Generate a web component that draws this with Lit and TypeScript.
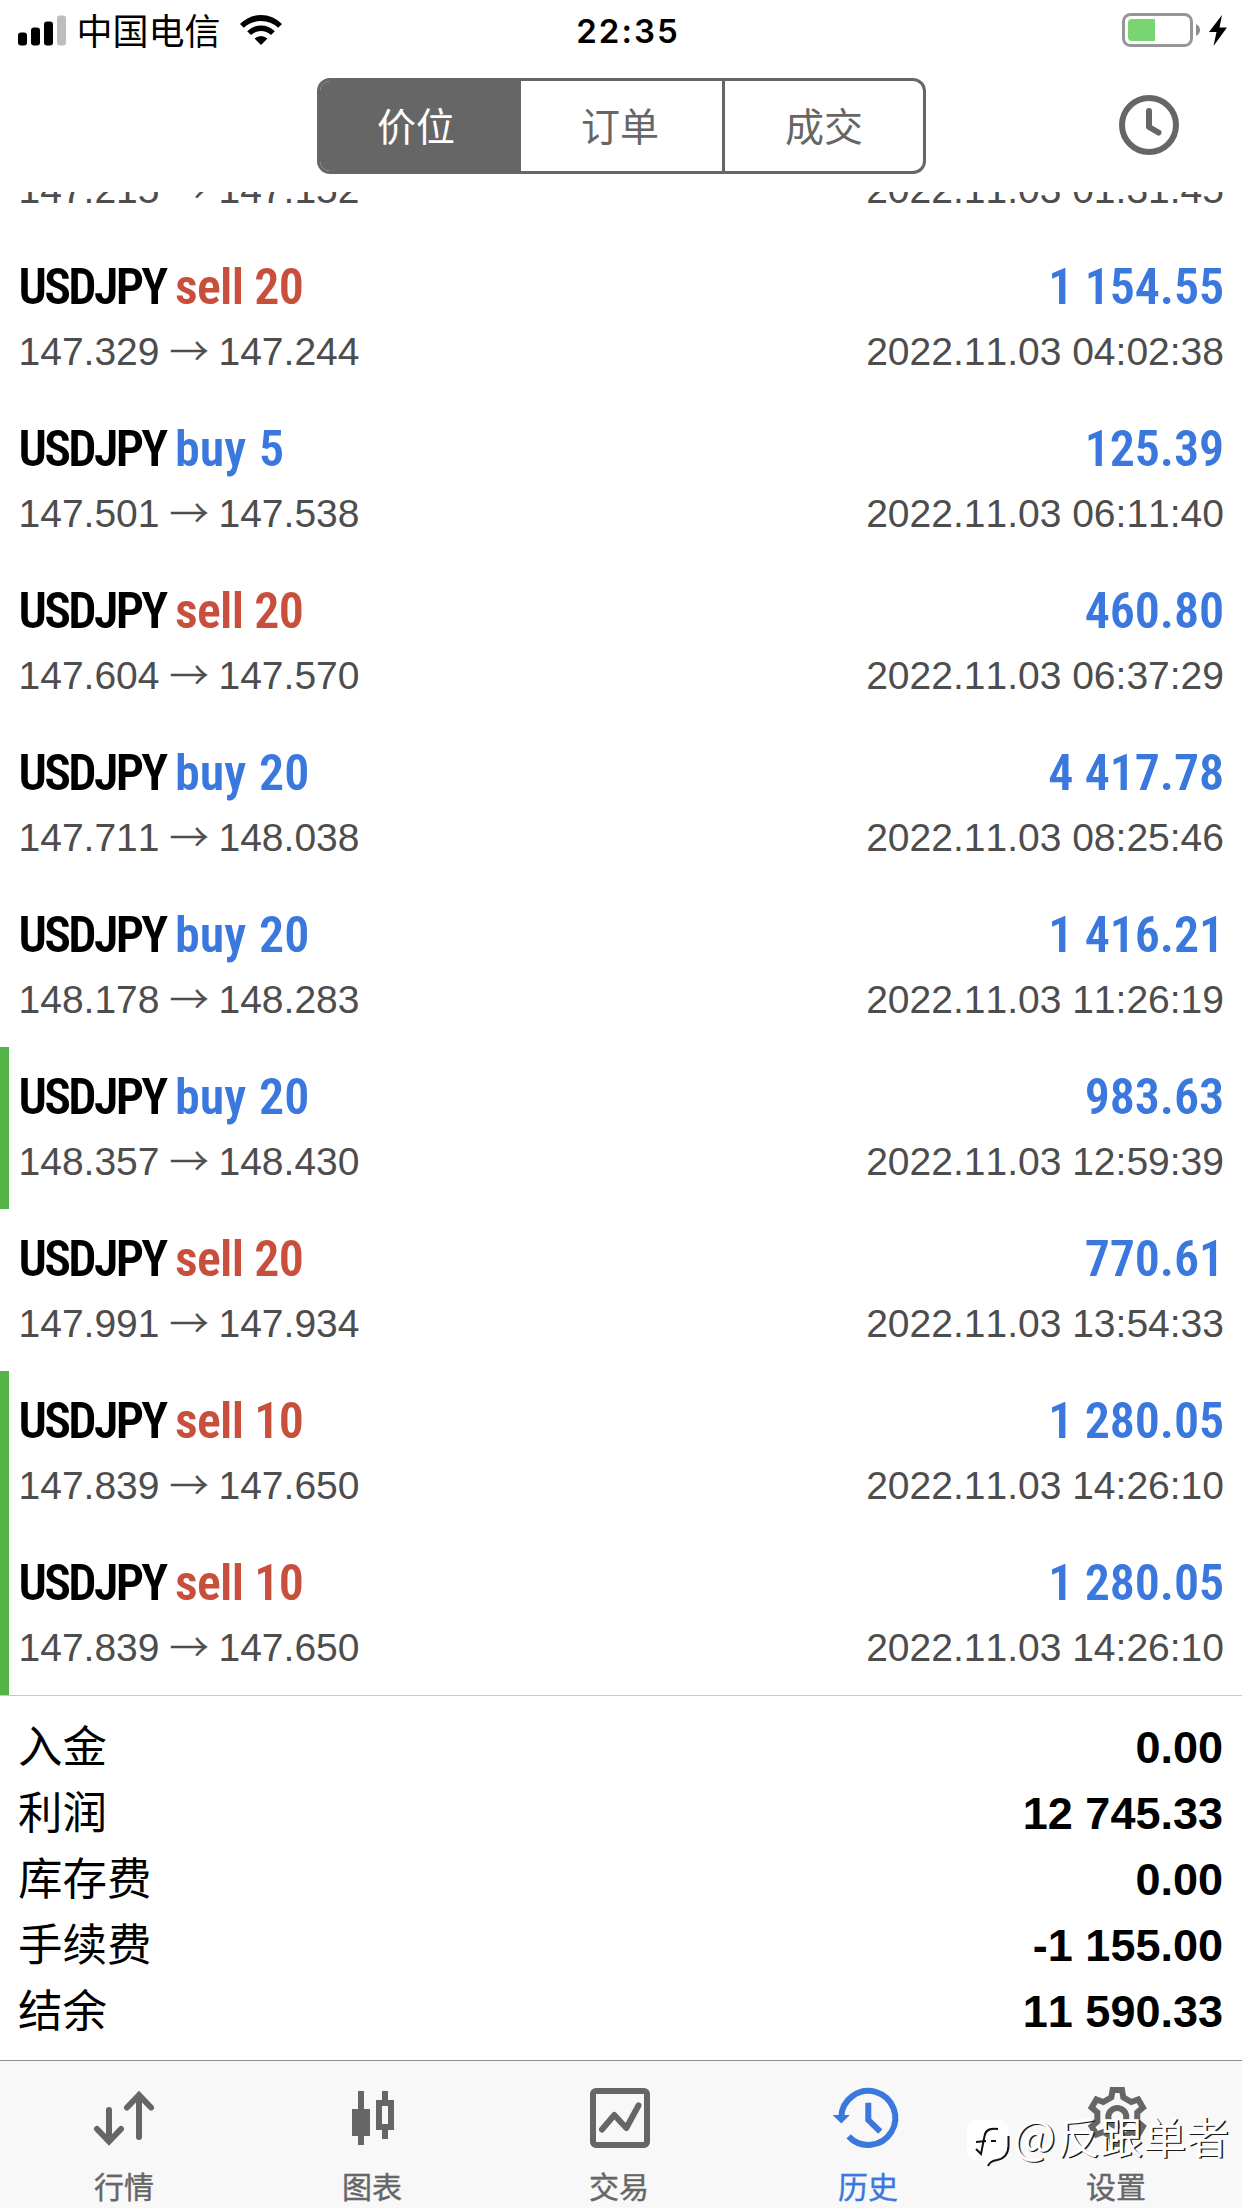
import { LitElement, html, svg, css } from "lit";
import { customElement } from "lit/decorators.js";
import { classMap } from "lit/directives/class-map.js";

interface Deal {
  side: "buy" | "sell";
  volume: string;
  open: string;
  close: string;
  profit: string;
  time: string;
  marked?: boolean;
}

// The oldest deal is scrolled partly under the header: only its detail line shows.
const scrolled = { open: "147.215", close: "147.152", time: "2022.11.03 01:31:45" };

const deals: Deal[] = [
  { side: "sell", volume: "20", open: "147.329", close: "147.244", profit: "1 154.55", time: "2022.11.03 04:02:38" },
  { side: "buy", volume: "5", open: "147.501", close: "147.538", profit: "125.39", time: "2022.11.03 06:11:40" },
  { side: "sell", volume: "20", open: "147.604", close: "147.570", profit: "460.80", time: "2022.11.03 06:37:29" },
  { side: "buy", volume: "20", open: "147.711", close: "148.038", profit: "4 417.78", time: "2022.11.03 08:25:46" },
  { side: "buy", volume: "20", open: "148.178", close: "148.283", profit: "1 416.21", time: "2022.11.03 11:26:19" },
  { side: "buy", volume: "20", open: "148.357", close: "148.430", profit: "983.63", time: "2022.11.03 12:59:39", marked: true },
  { side: "sell", volume: "20", open: "147.991", close: "147.934", profit: "770.61", time: "2022.11.03 13:54:33" },
  { side: "sell", volume: "10", open: "147.839", close: "147.650", profit: "1 280.05", time: "2022.11.03 14:26:10", marked: true },
  { side: "sell", volume: "10", open: "147.839", close: "147.650", profit: "1 280.05", time: "2022.11.03 14:26:10", marked: true },
];

const totals = [
  ["入金", "0.00"],
  ["利润", "12 745.33"],
  ["库存费", "0.00"],
  ["手续费", "-1 155.00"],
  ["结余", "11 590.33"],
];

const gearPoints = () => {
  const pts: string[] = [];
  const at = (deg: number, r: number) => {
    const a = (deg * Math.PI) / 180;
    pts.push(`${(32.3 + r * Math.sin(a)).toFixed(2)},${(32 - r * Math.cos(a)).toFixed(2)}`);
  };
  for (let i = 0; i < 6; i++) {
    const d = i * 60;
    at(d - 10, 27.3);
    at(d + 10, 27.3);
    at(d + 17, 20.5);
    at(d + 43, 20.5);
  }
  return pts.join(" ");
};

const tabs = [
  {
    label: "行情",
    icon: svg`<g fill="none" stroke="currentColor" stroke-width="6" stroke-linecap="round">
      <path d="M18 25V55M6 44L18 56.5L30 44" /><path d="M48 52V11M36 22.5L48 10L60 22.5" /></g>`,
  },
  {
    label: "图表",
    icon: svg`<g fill="currentColor"><path d="M19 6h6v18h6v27h-6v9h-6v-9h-6V24h6z" />
      <path fill-rule="evenodd" d="M43 6h6v9h6v30h-6v9h-6v-9h-6V15h6zM43 21v18h6V21z" /></g>`,
  },
  {
    label: "交易",
    nudge: true,
    icon: svg`<g fill="none" stroke="currentColor" stroke-width="6">
      <rect x="5" y="6" width="54" height="54" rx="3" />
      <path d="M14 44.5L26.3 30L38.3 43L50.5 20.5" stroke-linecap="round" stroke-linejoin="round" /></g>`,
  },
  {
    label: "历史",
    active: true,
    nudge: true,
    icon: svg`<g fill="none" stroke="currentColor" stroke-width="6">
      <path d="M4.3 32A27 27 0 1 1 11.6 51.4" /><path d="M31.3 17.7V35L43.3 46.6" /></g>
      <path d="M-4.3 30H12.8L4.3 38.6z" fill="currentColor" />`,
  },
  {
    label: "设置",
    nudge: true,
    icon: svg`<g fill="none" stroke="currentColor" stroke-width="6">
      <polygon points=${gearPoints()} /><circle cx="32.3" cy="32" r="9" /></g>`,
  },
];

@customElement("app-root")
export class AppRoot extends LitElement {
  static styles = css`
    :host {
      display: flex;
      flex-direction: column;
      position: relative;
      width: 1242px;
      height: 2208px;
      overflow: hidden;
      background: #fff;
      color: #000;
      font-family: "Liberation Sans", "Noto Sans CJK SC", sans-serif;
      font-kerning: none;
    }
    * { box-sizing: border-box; }
    svg { display: block; overflow: visible; flex: none; }

    .status {
      display: grid;
      grid-template-columns: 1fr auto 1fr;
      align-items: center;
      height: 60px;
      padding: 0 14px 0 18px;
      flex: none;
    }
    .carrier { display: flex; align-items: center; }
    .carrier span {
      margin: -2px 19.5px 0 9.5px;
      font: 400 36px/50px "Noto Sans CJK SC", sans-serif;
    }
    .time {
      font: 600 33px/50px Inter, sans-serif;
      letter-spacing: 2px;
      margin-top: 1px;
      margin-left: 10px;
    }
    .power { display: flex; justify-content: flex-end; }

    .nav {
      display: grid;
      grid-template-columns: 1fr 609px 1fr;
      height: 132px;
      padding-top: 18px;
      flex: none;
      align-items: start;
    }
    .segments {
      grid-column: 2;
      display: grid;
      grid-template-columns: 201px 201px 201px;
      height: 96px;
      border: 3px solid #666;
      border-radius: 13px;
      overflow: hidden;
      color: #666;
    }
    .segment {
      display: flex;
      align-items: center;
      justify-content: center;
      padding: 0 2px 5px 0;
      font: 400 39px/50px "Noto Sans CJK SC", sans-serif;
    }
    .segment.on { background: #666; color: #fff; padding-right: 8px; }
    .segment:last-child { border-left: 3px solid #666; padding: 0 0 5px 1px; }
    .period {
      justify-self: end;
      margin: 14px 60px 0 0;
      color: #666;
    }

    .deals {
      display: flex;
      flex-direction: column;
      justify-content: flex-end;
      height: 1503px;
      flex: none;
      overflow: hidden;
    }
    .deal {
      height: 162px;
      flex: none;
      padding: 20px 18px 0 9.5px;
      border-left: 9px solid transparent;
    }
    .deal.scrolled { height: 90px; padding-top: 18px; margin-top: -45px; display: flex; flex-direction: column; }
    .deal.marked { border-left-color: #53b548; }
    .line { display: flex; justify-content: space-between; }
    .head {
      font: 600 50px/60px "Roboto Condensed", Roboto, sans-serif;
      font-stretch: 75%;
      font-kerning: normal;
    }
    .symbol { letter-spacing: -2.7px; margin-right: 9.5px; }
    .order { letter-spacing: -0.7px; }
    .order.buy { letter-spacing: 0.1px; word-spacing: 1px; }
    .buy, .profit { color: #3a78de; }
    .sell { color: #c94f3d; }
    .profit { letter-spacing: -0.1px; }
    .detail {
      margin-top: 10px;
      font-size: 39px;
      line-height: 50px;
      color: #4d4d4d;
    }
    .scrolled .detail { margin-top: 0; }
    .prices { display: flex; align-items: baseline; height: 50px; margin-top: -4px; }
    .arrow {
      width: 39px;
      margin: 0 10px;
      font: 300 39px/50px "Noto Sans CJK SC", sans-serif;
      -webkit-text-stroke: 0.5px #4d4d4d;
    }

    .totals {
      flex: 1;
      margin: 0;
      padding: 15px 19px 0 18px;
      border-top: 1px solid #c8c8c8;
    }
    .total {
      display: flex;
      justify-content: space-between;
      align-items: baseline;
      height: 66px;
    }
    .total dt, .total dd { margin: 0; line-height: 66px; font-size: 45px; }
    .total dt {
      font-family: "Noto Sans CJK SC", sans-serif;
      font-size: 44.5px;
    }
    .total dd { font-weight: 700; }

    .tabs {
      display: grid;
      grid-template-columns: 248px 248px 250px 248px 248px;
      height: 148px;
      flex: none;
      border-top: 1px solid #8f8f8f;
      background: #f8f8f8;
      color: #666;
    }
    .tab {
      display: flex;
      flex-direction: column;
      align-items: center;
      gap: 14px;
      padding-top: 24px;
      font: 400 30px/40px "Noto Sans CJK SC", sans-serif;
      -webkit-text-stroke: 0.4px currentColor;
    }
    .tab.on { color: #3a78de; }
    .nudge { margin-right: 4px; }

    .mark {
      position: absolute;
      left: 966px;
      top: 2112px;
      display: flex;
      align-items: flex-start;
      color: #fff;
      font: 400 43px/54px "Noto Sans CJK SC", sans-serif;
      text-shadow: 1.4px 1.4px 0.5px #1a1a1a;
      white-space: nowrap;
    }
    .mark svg { margin: 6px 3px 0 0; }
    .mark span { margin-top: -4px; }
    .mark .at { width: 44px; font-size: 45px; }
  `;

  private detail(d: { open: string; close: string; time: string }) {
    return html`<div class="line detail">
      <div class="prices"><span>${d.open}</span><span class="arrow">→</span><span>${d.close}</span></div>
      <div>${d.time}</div>
    </div>`;
  }

  render() {
    return html`
      <div class="status">
        <div class="carrier">
          <svg width="49" height="31" viewBox="0 0 49 31">
            <rect x="0" y="17.5" width="9" height="13" rx="3" />
            <rect x="13" y="12.5" width="9" height="18" rx="3" />
            <rect x="26" y="6.5" width="9" height="24" rx="3" />
            <rect x="39" y="0.5" width="9" height="30" rx="3" fill="#bdbdbd" />
          </svg>
          <span>中国电信</span>
          <svg width="42" height="30" viewBox="0 0 42 30">
            <path d="M0 9Q9 0 21 0T42 9L38.2 12.8Q31 6 21 6T3.8 12.8z" />
            <path d="M7.2 16.2Q13 10.5 21 10.5T34.8 16.2L31 20Q26.5 16 21 16T11 20z" />
            <path d="M14.5 23.5Q17.5 21 21 21T27.5 23.5L21 30z" />
          </svg>
        </div>
        <div class="time">22:35</div>
        <div class="power">
          <svg width="106" height="34" viewBox="0 0 106 34">
            <rect x="1.5" y="1.5" width="68" height="31" rx="7" fill="#fff" stroke="#969696" stroke-width="3" />
            <path d="M10 6H33V28H10Q6 28 6 24V10Q6 6 10 6z" fill="#78d572" />
            <path d="M74 11Q78 13 78 17T74 23z" fill="#8e8e8e" />
            <path d="M100 2L87 19H94.5L91.5 33L105 14.5H97.5z" />
          </svg>
        </div>
      </div>

      <div class="nav">
        <div class="segments">
          <div class="segment on">价位</div>
          <div class="segment">订单</div>
          <div class="segment">成交</div>
        </div>
        <svg class="period" width="66" height="66" viewBox="0 0 66 66" fill="none" stroke="currentColor" stroke-width="6">
          <circle cx="33" cy="33" r="27" />
          <path d="M33 19V35L42.5 40.5" stroke-linecap="round" stroke-linejoin="round" />
        </svg>
      </div>

      <div class="deals">
        <div class="deal scrolled">${this.detail(scrolled)}</div>
        ${deals.map(
          (d) => html`<div class=${classMap({ deal: true, marked: !!d.marked })}>
            <div class="line head">
              <div><span class="symbol">USDJPY</span><span class="order ${d.side}">${d.side} ${d.volume}</span></div>
              <div class="profit">${d.profit}</div>
            </div>
            ${this.detail(d)}
          </div>`
        )}
      </div>

      <dl class="totals">
        ${totals.map(([k, v]) => html`<div class="total"><dt>${k}</dt><dd>${v}</dd></div>`)}
      </dl>

      <div class="tabs">
        ${tabs.map(
          (t) => html`<div class=${classMap({ tab: true, on: !!t.active })}>
            <svg width="66" height="66" viewBox="0 0 66 66">${t.icon}</svg>
            <span class=${classMap({ nudge: !!t.nudge })}>${t.label}</span>
          </div>`
        )}
      </div>

      <div class="mark">
        <svg width="44" height="50" viewBox="0 0 44 50">
          <path d="M12 2H31Q42 2 42.5 13V28Q42 40 31 42Q25 43 22 48L20 42H12Q2 42 1 31V13Q2 2 12 2z" fill="#fff" />
          <path d="M42.5 18V28Q42 40 31 42Q24 43 22 48" fill="none" stroke="#111" stroke-width="2" />
          <path d="M32 11Q20 9 18.5 18L15 36L10 31" fill="none" stroke="#111" stroke-width="2" />
          <path d="M10 24L20 23M25 23H30" fill="none" stroke="#111" stroke-width="2" />
        </svg>
        <span class="at">@</span><span>反跟单者</span>
      </div>
    `;
  }
}
